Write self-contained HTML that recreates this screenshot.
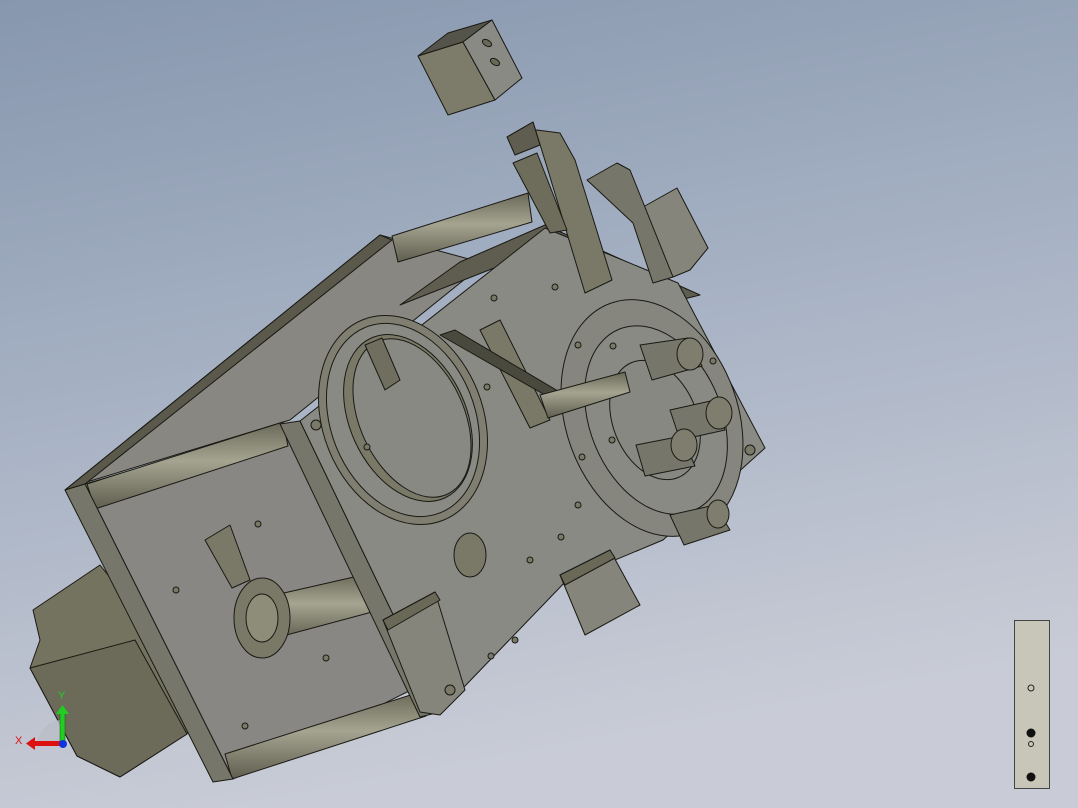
<!DOCTYPE html>
<html><head><meta charset="utf-8"><style>
html,body{margin:0;padding:0;width:1078px;height:808px;overflow:hidden}
svg{display:block}
text{font-family:"Liberation Sans",sans-serif}
</style></head><body>
<svg width="1078" height="808" viewBox="0 0 1078 808" xmlns="http://www.w3.org/2000/svg">
<defs>
<linearGradient id="bg" x1="0" y1="0" x2="0.25" y2="1">
<stop offset="0" stop-color="#8797ae"/><stop offset="0.5" stop-color="#a7b2c4"/><stop offset="1" stop-color="#c9ccd6"/></linearGradient>
<linearGradient id="rod" x1="0" y1="0" x2="0" y2="1">
<stop offset="0" stop-color="#6a6958"/><stop offset="0.45" stop-color="#a5a491"/><stop offset="1" stop-color="#5f5e4f"/></linearGradient>
</defs>
<rect width="1078" height="808" fill="url(#bg)"/>
<g stroke="#1a1a14" stroke-width="1" stroke-linejoin="round">
<!-- motor -->
<polygon points="33,610 100,565 120,590 200,690 187,734 120,777 77,756 30,668 40,640" fill="#74735f"/>
<polygon points="30,668 135,640 187,734 120,777 77,756" fill="#6c6b5a"/>
<!-- top long block -->
<polygon points="65,490 380,235 480,262 470,275 290,420 87,482" fill="#888782"/>
<polygon points="65,490 380,235 392,240 85,484" fill="#5a594c"/>
<!-- top rod -->
<polygon points="392,236 528,193 532,222 398,262" fill="url(#rod)"/>
<!-- back upper block behind front plate -->
<polygon points="400,305 460,262 545,225 700,295 680,300 540,250" fill="#5e5d50"/>
<!-- lower plate face -->
<polygon points="85,484 300,421 415,688 233,779" fill="#888783"/>
<polygon points="87,484 283,422 288,446 95,509" fill="url(#rod)"/>
<polygon points="225,754 420,692 426,716 232,779" fill="url(#rod)"/>
<polygon points="262,598 367,574 372,612 268,640" fill="url(#rod)"/>
<ellipse cx="262" cy="618" rx="28" ry="40" fill="#7a7968"/>
<ellipse cx="262" cy="618" rx="16" ry="24" fill="#8e8d7a"/>
<polygon points="205,540 230,525 250,580 232,588" fill="#7a7968"/>
<polygon points="65,490 85,484 233,779 213,782" fill="#77766a"/>
<polygon points="280,424 300,421 440,712 420,717" fill="#77766a"/>
<!-- front plate -->
<polygon points="300,421 545,228 678,283 765,448 663,540 567,580 440,712" fill="#8a8a85"/>
<!-- ring -->
<ellipse cx="403" cy="420" rx="80" ry="108" transform="rotate(-22 403 420)" fill="#7f7e70"/>
<ellipse cx="403" cy="420" rx="72" ry="100" transform="rotate(-22 403 420)" fill="#8a8a85"/>
<ellipse cx="408" cy="418" rx="58" ry="88" transform="rotate(-25 408 418)" fill="#7a7968"/>
<ellipse cx="412" cy="418" rx="52" ry="84" transform="rotate(-25 412 418)" fill="#898984"/>
<polygon points="365,345 382,338 400,380 385,390" fill="#6f6e5f"/>
<polygon points="480,330 500,320 550,420 530,428" fill="#7a7968"/>
<polygon points="440,335 455,330 590,410 580,415" fill="#4a493e"/>
<!-- rotary disc -->
<ellipse cx="652" cy="418" rx="86" ry="122" transform="rotate(-20 652 418)" fill="#86867f"/>
<ellipse cx="656" cy="420" rx="66" ry="98" transform="rotate(-22 656 420)" fill="#8a8a85"/>
<ellipse cx="655" cy="420" rx="42" ry="62" transform="rotate(-22 655 420)" fill="#888882"/>
<polygon points="540,395 625,372 630,392 548,418" fill="url(#rod)"/>
<polygon points="640,345 688,338 702,366 652,380" fill="#77766a"/>
<polygon points="670,410 715,400 725,430 680,440" fill="#77766a"/>
<polygon points="636,445 682,436 695,466 645,476" fill="#77766a"/>
<ellipse cx="690" cy="354" rx="13" ry="16" fill="#7f7e6e"/>
<ellipse cx="719" cy="413" rx="13" ry="16" fill="#7f7e6e"/>
<ellipse cx="684" cy="445" rx="13" ry="16" fill="#7f7e6e"/>
<!-- blocks -->
<polygon points="670,515 715,505 730,530 684,545" fill="#77766a"/>
<ellipse cx="718" cy="514" rx="11" ry="14" fill="#7f7e6e"/>
<polygon points="560,575 610,550 640,605 585,635" fill="#86857c"/>
<polygon points="560,575 610,550 615,558 565,585" fill="#6a6958"/>
<polygon points="383,620 435,592 465,690 440,715 420,712" fill="#86857c"/>
<polygon points="383,620 435,592 440,600 388,630" fill="#6a6958"/>
<!-- upper mechanism -->
<polygon points="643,207 677,188 708,248 690,270 673,277" fill="#86857c"/>
<polygon points="587,180 617,163 630,170 673,277 653,283 633,223" fill="#77766a"/>
<polygon points="507,137 533,122 547,167 585,293 612,280 575,160 560,133 537,130" fill="#7a7968"/>
<polygon points="513,163 537,153 567,230 550,233" fill="#6e6d5c"/>
<polygon points="507,137 533,122 540,145 515,155" fill="#5e5d50"/>
<!-- cube -->
<polygon points="418,56 448,33 492,20 463,42" fill="#55544a"/>
<polygon points="418,56 463,42 495,100 448,115" fill="#7d7c6b"/>
<polygon points="463,42 492,20 522,78 495,100" fill="#8a8a85"/>
<ellipse cx="487" cy="43" rx="3" ry="5" fill="#6a6958" transform="rotate(-60 487 43)"/>
<ellipse cx="495" cy="62" rx="3" ry="5" fill="#6a6958" transform="rotate(-60 495 62)"/>
<!-- holes -->
<g fill="#7a7968">
<circle cx="494" cy="298" r="3"/><circle cx="555" cy="287" r="3"/><circle cx="487" cy="387" r="3"/><circle cx="367" cy="447" r="3"/>
<circle cx="578" cy="505" r="3"/><circle cx="561" cy="537" r="3"/><circle cx="530" cy="560" r="3"/><circle cx="515" cy="640" r="3"/>
<circle cx="491" cy="656" r="3"/><circle cx="258" cy="524" r="3"/><circle cx="176" cy="590" r="3"/><circle cx="326" cy="658" r="3"/><circle cx="245" cy="726" r="3"/>
<circle cx="316" cy="425" r="5"/><circle cx="450" cy="690" r="5"/><circle cx="750" cy="450" r="5"/>
<circle cx="578" cy="345" r="3"/><circle cx="613" cy="346" r="3"/><circle cx="713" cy="361" r="3"/><circle cx="582" cy="457" r="3"/><circle cx="612" cy="440" r="3"/>
</g>
<ellipse cx="470" cy="555" rx="16" ry="22" fill="#7a7968"/>
</g>
<!-- triad -->
<path d="M38,745 A24,24 0 0 1 62,720 L62,745 Z" fill="#b9bdc6" opacity="0.8"/>
<rect x="60" y="712" width="5" height="30" fill="#22cc22" stroke="#0a5a0a" stroke-width="0.5"/>
<polygon points="56,714 62.5,705 69,714" fill="#22cc22"/>
<rect x="34" y="741" width="28" height="5" fill="#dd1111"/>
<polygon points="35,737 26,743.5 35,750" fill="#dd1111"/>
<circle cx="63" cy="744" r="4" fill="#1133dd"/>
<text x="58" y="699" font-size="11" fill="#22cc22">Y</text>
<text x="15" y="744" font-size="11" fill="#dd1111">X</text>
<!-- legend -->
<rect x="1014.5" y="620.5" width="35" height="168" fill="#c8c6b8" stroke="#444" stroke-width="1"/>
<circle cx="1031" cy="688" r="3" fill="none" stroke="#222"/>
<circle cx="1031" cy="733" r="4.5" fill="#111"/>
<circle cx="1031" cy="744" r="2.5" fill="none" stroke="#222"/>
<circle cx="1031" cy="777" r="4.5" fill="#111"/>
</svg>
</body></html>
